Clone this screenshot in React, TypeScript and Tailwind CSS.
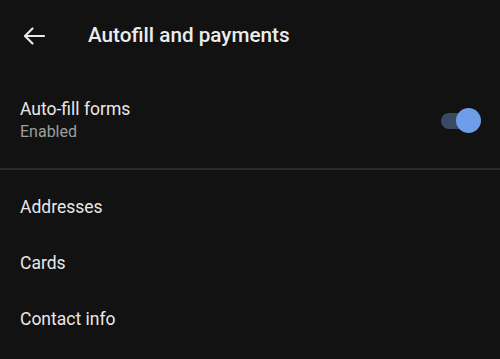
import { useState } from 'react';

const items = ['Addresses', 'Cards', 'Contact info'];

export default function App() {
  const [enabled, setEnabled] = useState(true);

  return (
    <div
      className="w-[500px] h-[359px] bg-[#121212] text-[#e8e8e8] overflow-hidden"
      style={{ fontFamily: 'Roboto, "Noto Sans", sans-serif' }}
    >
      {/* Header */}
      <header className="h-[71px] flex items-center">
        <button className="ml-[22px] w-6 h-6 flex items-center justify-center text-[#e8e8e8]">
          <svg width="24" height="24" viewBox="0 0 24 24" fill="none" stroke="currentColor" strokeWidth="2.2" strokeLinecap="round" strokeLinejoin="round">
            <path d="M22 12H3" />
            <path d="M10.5 4.5L3 12l7.5 7.5" />
          </svg>
        </button>
        <h1 className="ml-[42px] text-[20.7px] font-medium text-[#ececec]">Autofill and payments</h1>
      </header>

      {/* Auto-fill toggle */}
      <div className="h-[97px] flex items-center justify-between pl-5 pr-[19px]">
        <div className="flex flex-col mt-[2px]">
          <span className="text-[17.5px] leading-[23px] text-[#e8e8e8]">Auto-fill forms</span>
          <span className="text-[16px] leading-[22px] text-[#9e9e9e]">{enabled ? 'Enabled' : 'Disabled'}</span>
        </div>
        <button onClick={() => setEnabled(!enabled)} className="relative w-[40px] h-[25px] mt-[2px] flex items-center">
          <span className={`w-[35px] h-[16px] rounded-full ${enabled ? 'bg-[#3a4a62]' : 'bg-[#555]'}`} />
          <span
            className={`absolute top-0 w-[25px] h-[25px] rounded-full ${enabled ? 'right-0 bg-[#6e9de9]' : 'left-0 bg-[#bbb]'}`}
          />
        </button>
      </div>

      <div className="h-[2px] bg-[#2b2b2b]" />

      <ul className="pt-[9px]">
        {items.map((item) => (
          <li key={item} className="h-14 flex items-center pl-5 text-[17.5px] text-[#e8e8e8]">
            {item}
          </li>
        ))}
      </ul>
    </div>
  );
}
